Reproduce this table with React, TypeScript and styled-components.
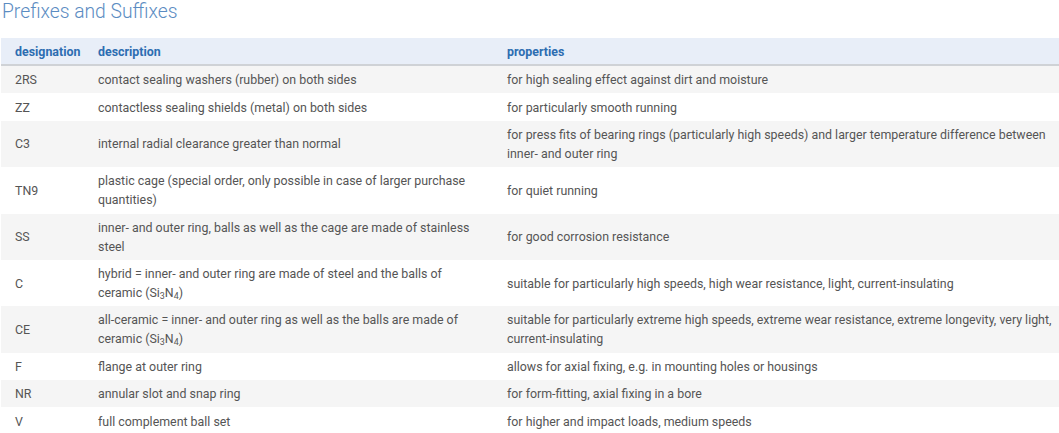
import React from "react";
import styled, { createGlobalStyle } from "styled-components";

const Global = createGlobalStyle`
  html, body { margin: 0; padding: 0; background: #ffffff; }
  body { font-family: Roboto, "Liberation Sans", Arial, sans-serif; }
`;

const Page = styled.div`
  padding: 0 0 0 1px;
  overflow: hidden;
`;

const Title = styled.h2`
  margin: 0;
  padding: 0 0 0 1px;
  font-size: 19.3px;
  line-height: 24px;
  font-weight: 300;
  color: #5b8cc2;
  height: 38px;
`;

const Table = styled.table`
  width: 100%;
  border-collapse: collapse;
  table-layout: fixed;
  font-size: 12.4px;
  color: #555555;
`;

const HeadCell = styled.th`
  text-align: left;
  font-weight: 700;
  color: #2d6db1;
  background: #e8eef8;
  border-bottom: 2px solid #cfd2d6;
  padding: 4.5px 2px 3.5px 14px;
  height: 18px;
  line-height: 18px;
`;

const Row = styled.tr<{ $striped: boolean }>`
  background: ${(p) => (p.$striped ? "#f5f5f5" : "#ffffff")};
`;

const Cell = styled.td<{ $wide?: boolean }>`
  padding: 4.2px ${(p) => (p.$wide ? "2px" : "10px")} 4.2px 14px;
  line-height: 19px;
  vertical-align: middle;
`;

const Sub = styled.sub`
  font-size: 0.72em;
  line-height: 0;
  vertical-align: -0.25em;
`;

const rows: [string, React.ReactNode, string][] = [
  ["2RS", "contact sealing washers (rubber) on both sides", "for high sealing effect against dirt and moisture"],
  ["ZZ", "contactless sealing shields (metal) on both sides", "for particularly smooth running"],
  ["C3", "internal radial clearance greater than normal", "for press fits of bearing rings (particularly high speeds) and larger temperature difference between inner- and outer ring"],
  ["TN9", "plastic cage (special order, only possible in case of larger purchase quantities)", "for quiet running"],
  ["SS", "inner- and outer ring, balls as well as the cage are made of stainless steel", "for good corrosion resistance"],
  [
    "C",
    <>hybrid = inner- and outer ring are made of steel and the balls of ceramic (Si<Sub>3</Sub>N<Sub>4</Sub>)</>,
    "suitable for particularly high speeds, high wear resistance, light, current-insulating",
  ],
  [
    "CE",
    <>all-ceramic = inner- and outer ring as well as the balls are made of ceramic (Si<Sub>3</Sub>N<Sub>4</Sub>)</>,
    "suitable for particularly extreme high speeds, extreme wear resistance, extreme longevity, very light, current-insulating",
  ],
  ["F", "flange at outer ring", "allows for axial fixing, e.g. in mounting holes or housings"],
  ["NR", "annular slot and snap ring", "for form-fitting, axial fixing in a bore"],
  ["V", "full complement ball set", "for higher and impact loads, medium speeds"],
];

export default function App() {
  return (
    <Page>
      <Global />
      <Title>Prefixes and Suffixes</Title>
      <Table>
        <colgroup>
          <col style={{ width: 83 }} />
          <col style={{ width: 409 }} />
          <col />
        </colgroup>
        <thead>
          <tr>
            <HeadCell>designation</HeadCell>
            <HeadCell>description</HeadCell>
            <HeadCell>properties</HeadCell>
          </tr>
        </thead>
        <tbody>
          {rows.map((r, i) => (
            <Row key={r[0]} $striped={i % 2 === 0}>
              <Cell>{r[0]}</Cell>
              <Cell>{r[1]}</Cell>
              <Cell $wide>{r[2]}</Cell>
            </Row>
          ))}
        </tbody>
      </Table>
    </Page>
  );
}
